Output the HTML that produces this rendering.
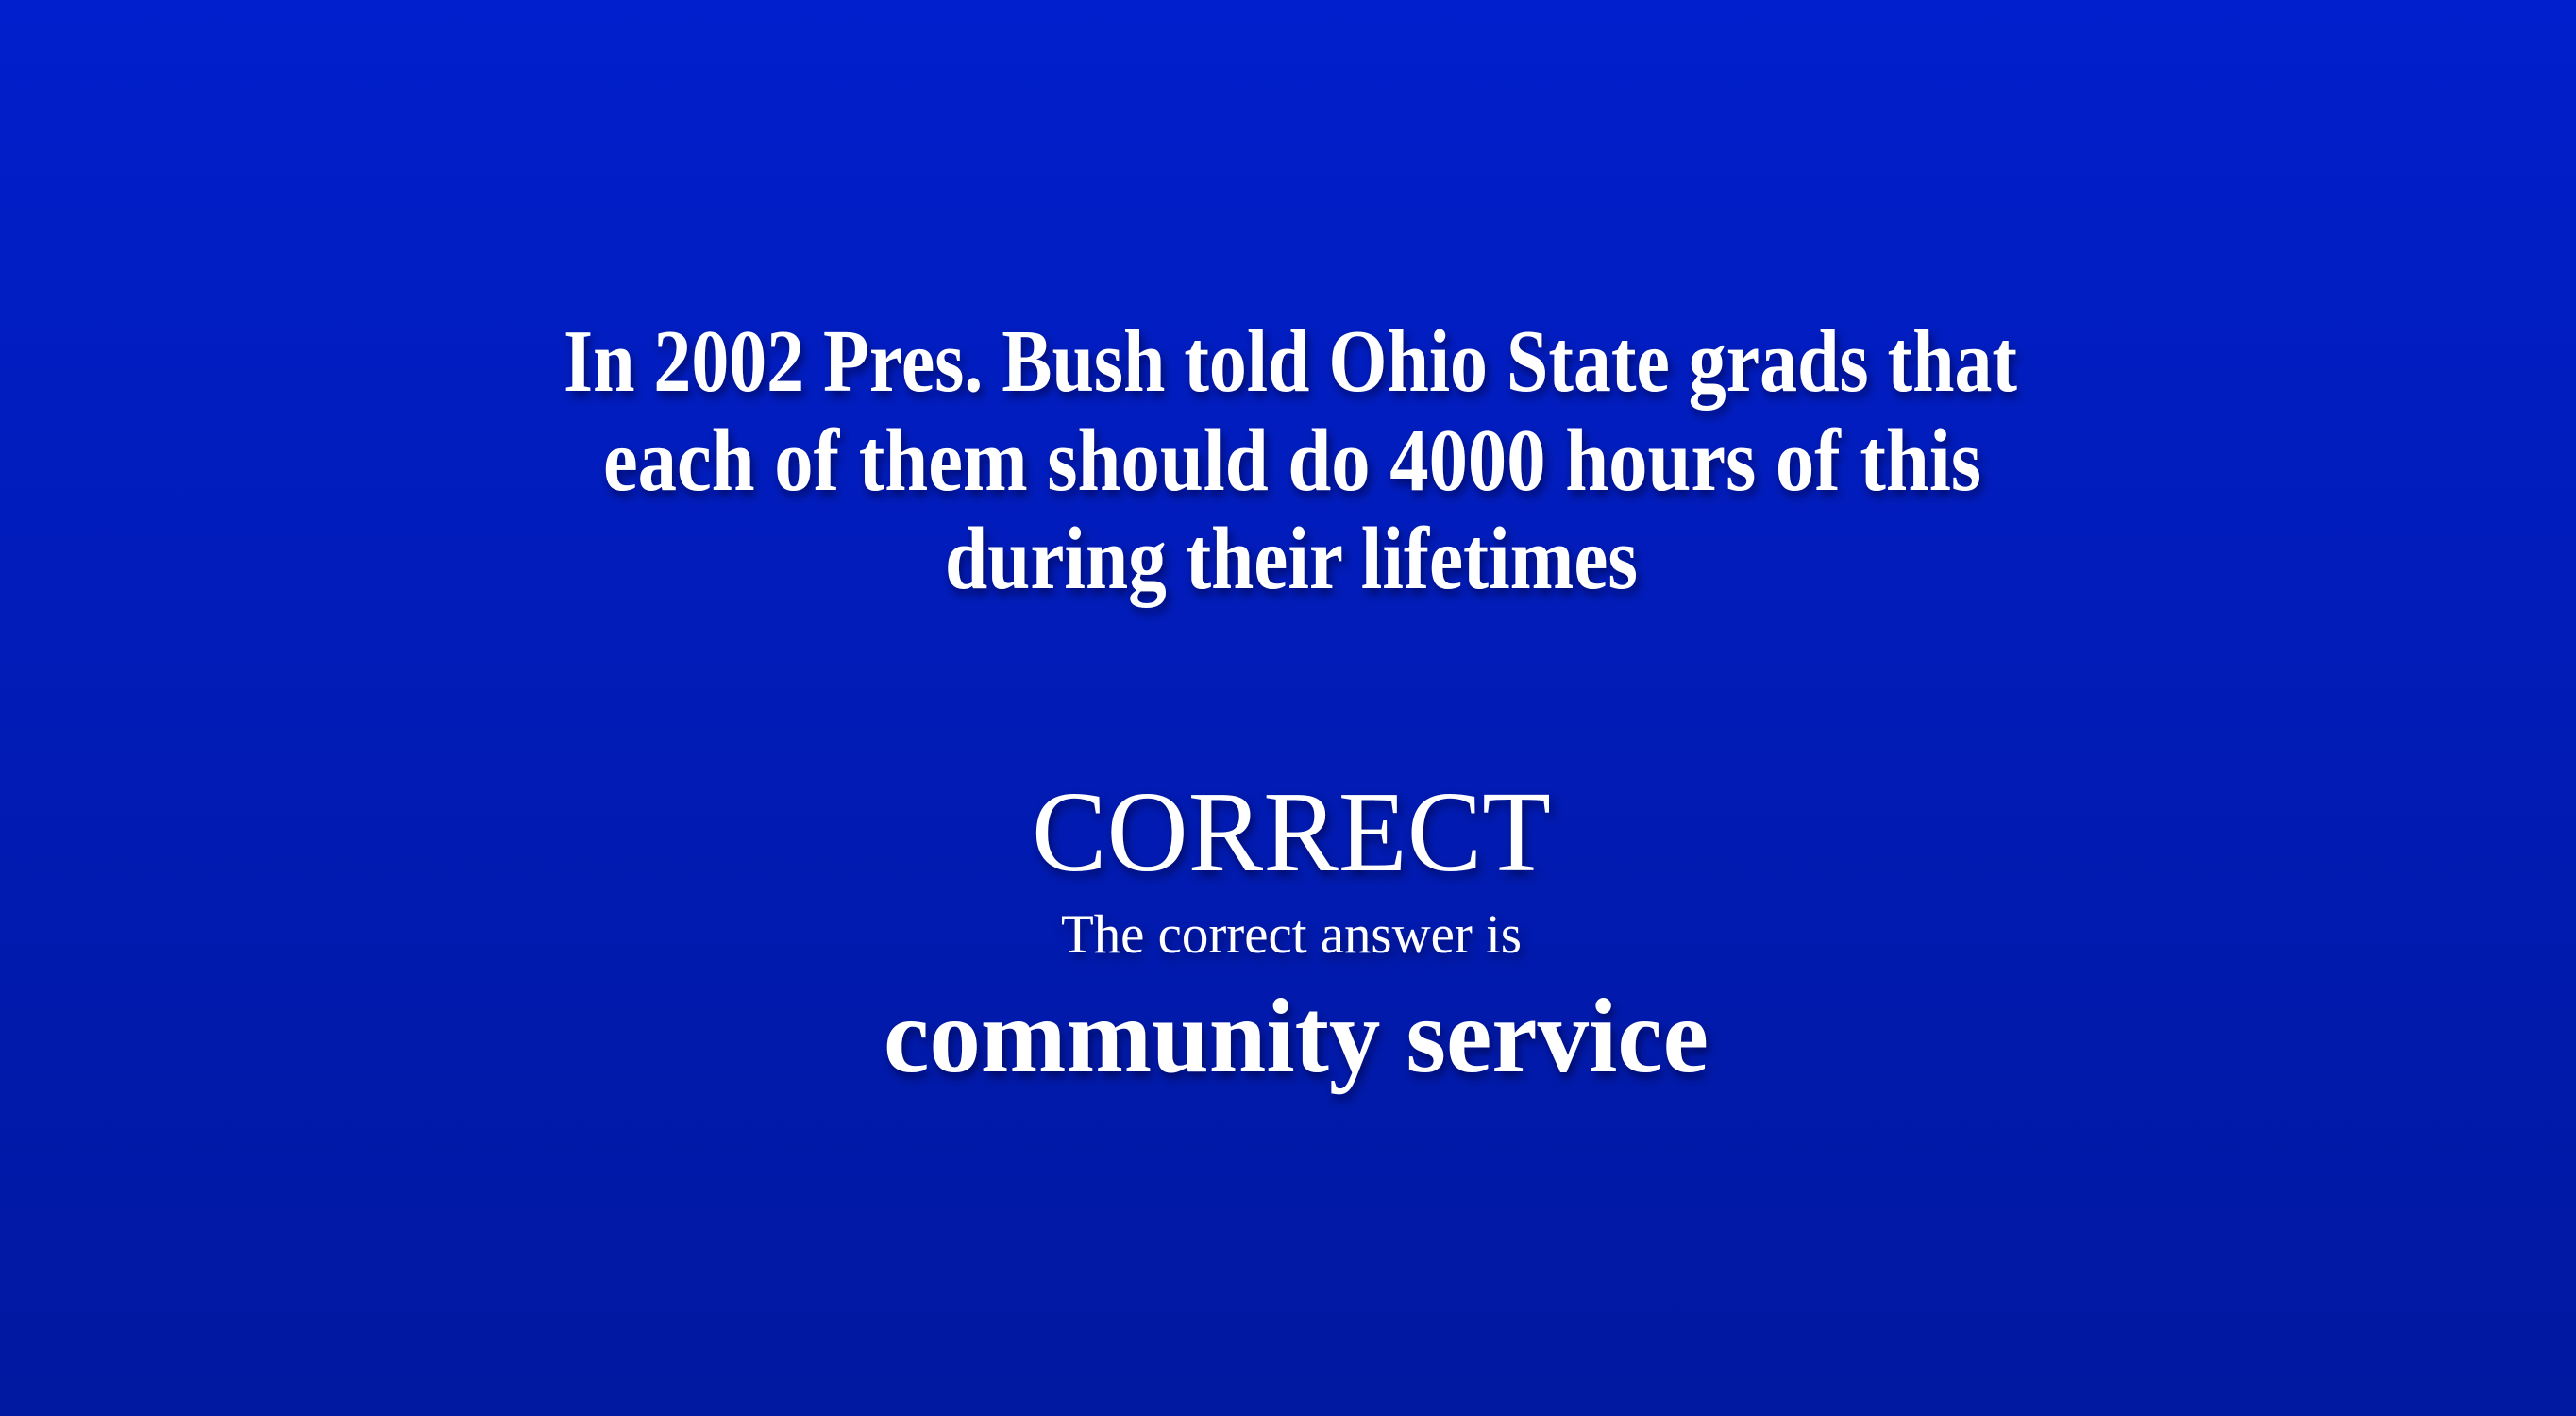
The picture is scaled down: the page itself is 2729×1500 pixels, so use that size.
<!DOCTYPE html>
<html><head><meta charset="utf-8"><style>
html,body{margin:0;padding:0;width:2729px;height:1500px;overflow:hidden;background:linear-gradient(#011fcc,#0118a0);}
svg{display:block}
text{font-family:"Liberation Serif",serif;fill:#fff;}
</style></head><body>
<svg width="2729" height="1500" viewBox="0 0 2729 1500">
<defs><filter id="s" x="-10%" y="-30%" width="120%" height="160%"><feDropShadow dx="3" dy="6" stdDeviation="5" flood-color="#000030" flood-opacity="0.6"/></filter></defs>
<g filter="url(#s)">
<text x="597" y="414" font-size="94" font-weight="bold" textLength="1540" lengthAdjust="spacingAndGlyphs">In 2002 Pres. Bush told Ohio State grads that</text>
<text x="639" y="519" font-size="94" font-weight="bold" textLength="1460" lengthAdjust="spacingAndGlyphs">each of them should do 4000 hours of this</text>
<text x="1001" y="623" font-size="94" font-weight="bold" textLength="734" lengthAdjust="spacingAndGlyphs">during their lifetimes</text>
<text x="1093" y="922" font-size="122" textLength="550" lengthAdjust="spacingAndGlyphs">CORRECT</text>
<text x="1124" y="1009" font-size="58" textLength="488" lengthAdjust="spacingAndGlyphs">The correct answer is</text>
<text x="936" y="1135" font-size="112" font-weight="bold" textLength="874" lengthAdjust="spacingAndGlyphs">community service</text>
</g>
</svg>
</body></html>
